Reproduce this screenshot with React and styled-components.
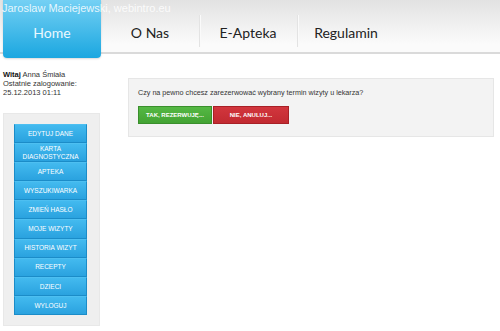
import React from "react";
import styled, { createGlobalStyle } from "styled-components";

const Global = createGlobalStyle`
  html, body { margin: 0; padding: 0; background: #fff; }
  body { font-family: "Liberation Sans", Arial, sans-serif; }
  * { box-sizing: border-box; }
`;

const Page = styled.div`
  width: 500px;
  height: 331px;
  overflow: hidden;
  position: relative;
`;

const Header = styled.header`
  position: relative;
  height: 54px;
  background: linear-gradient(#e2e2e2, #fbfbfb 85%);
  border-bottom: 2px solid #dadada;
  display: flex;
  align-items: flex-start;
  padding-left: 3px;
`;

const Credit = styled.div`
  position: absolute;
  left: 2px;
  top: 2px;
  font-size: 11px;
  color: rgba(255, 255, 255, 0.85);
  white-space: nowrap;
  z-index: 2;
`;

const NavItem = styled.a`
  width: 98px;
  height: ${(p) => (p.$active ? "58px" : "52px")};
  display: flex;
  align-items: center;
  justify-content: center;
  font-family: Lato, "Open Sans", sans-serif;
  font-size: 14px;
  padding-top: ${(p) => (p.$active ? "6px" : "12px")};
  color: ${(p) => (p.$active ? "#eaf8ff" : "#222")};
  background: ${(p) =>
    p.$active ? "linear-gradient(#74d0f4, #1ba7e0)" : "transparent"};
  border-radius: ${(p) => (p.$active ? "0 0 4px 4px" : "0")};
  box-shadow: ${(p) => (p.$active ? "0 1px 2px rgba(0,0,0,0.15)" : "none")};
  position: relative;
  z-index: ${(p) => (p.$active ? 1 : 0)};
  &::before {
    content: "";
    display: ${(p) => (p.$sep ? "block" : "none")};
    position: absolute;
    left: 0;
    top: 15px;
    height: 32px;
    width: 1px;
    background: #e3e3e3;
    box-shadow: 1px 0 0 #fafafa;
  }
`;

const Body = styled.div`
  display: flex;
  align-items: flex-start;
  padding: 16px 6px 0 3px;
  gap: 28px;
`;

const Sidebar = styled.aside`
  width: 97px;
  display: flex;
  flex-direction: column;
`;

const Welcome = styled.div`
  font-size: 7.5px;
  line-height: 9px;
  color: #333;
  height: 43px;
  b { color: #111; }
`;

const Menu = styled.nav`
  background: #efefef;
  border: 1px solid #e8e8e8;
  padding: 10px 12px 10px 10px;
  height: 213px;
  display: flex;
  flex-direction: column;
`;

const MenuButton = styled.a`
  height: 19.5px;
  display: flex;
  align-items: center;
  justify-content: center;
  text-align: center;
  font-size: 6.5px;
  line-height: 7.5px;
  color: #fff;
  text-transform: uppercase;
  background: linear-gradient(#43baef, #2aa2df);
  border: 1px solid #1b8cc8;
  border-top-color: #4dbff1;
`;

const Main = styled.main`
  flex: 1;
  margin-top: 8px;
  height: 59px;
  background: #f3f3f3;
  border: 1px solid #e6e6e6;
  padding: 9px 9px 0 9px;
`;

const Question = styled.p`
  margin: 0 0 8px;
  font-size: 7.2px;
  line-height: 10px;
  color: #333;
`;

const Actions = styled.div`
  display: flex;
  gap: 1px;
`;

const ActionButton = styled.button`
  width: ${(p) => p.$w}px;
  height: 18px;
  border: 1px solid ${(p) => p.$border};
  background: ${(p) => p.$bg};
  color: #fff;
  font-family: "Liberation Sans", Arial, sans-serif;
  font-weight: bold;
  font-size: 6px;
  padding: 0;
  cursor: pointer;
`;

const menu = [
  "Edytuj dane",
  "Karta diagnostyczna",
  "Apteka",
  "Wyszukiwarka",
  "Zmień hasło",
  "Moje wizyty",
  "Historia wizyt",
  "Recepty",
  "Dzieci",
  "Wyloguj",
];

export default function App() {
  return (
    <Page>
      <Global />
      <Header>
        <Credit>Jaroslaw Maciejewski, webintro.eu</Credit>
        <NavItem $active>Home</NavItem>
        <NavItem>O Nas</NavItem>
        <NavItem $sep>E-Apteka</NavItem>
        <NavItem $sep>Regulamin</NavItem>
      </Header>
      <Body>
        <Sidebar>
          <Welcome>
            <b>Witaj</b> Anna Śmiała
            <br />
            Ostatnie zalogowanie:
            <br />
            25.12.2013 01:11
          </Welcome>
          <Menu>
            {menu.map((m) => (
              <MenuButton key={m}>
                {m === "Karta diagnostyczna" ? (
                  <span>
                    Karta
                    <br />
                    diagnostyczna
                  </span>
                ) : (
                  m
                )}
              </MenuButton>
            ))}
          </Menu>
        </Sidebar>
        <Main>
          <Question>
            Czy na pewno chcesz zarezerwować wybrany termin wizyty u lekarza?
          </Question>
          <Actions>
            <ActionButton $w={74} $bg="linear-gradient(#55b844, #43a333)" $border="#3a8f2c">
              TAK, REZERWUJĘ...
            </ActionButton>
            <ActionButton $w={76} $bg="linear-gradient(#d2363d, #c22a31)" $border="#a82026">
              NIE, ANULUJ...
            </ActionButton>
          </Actions>
        </Main>
      </Body>
    </Page>
  );
}
